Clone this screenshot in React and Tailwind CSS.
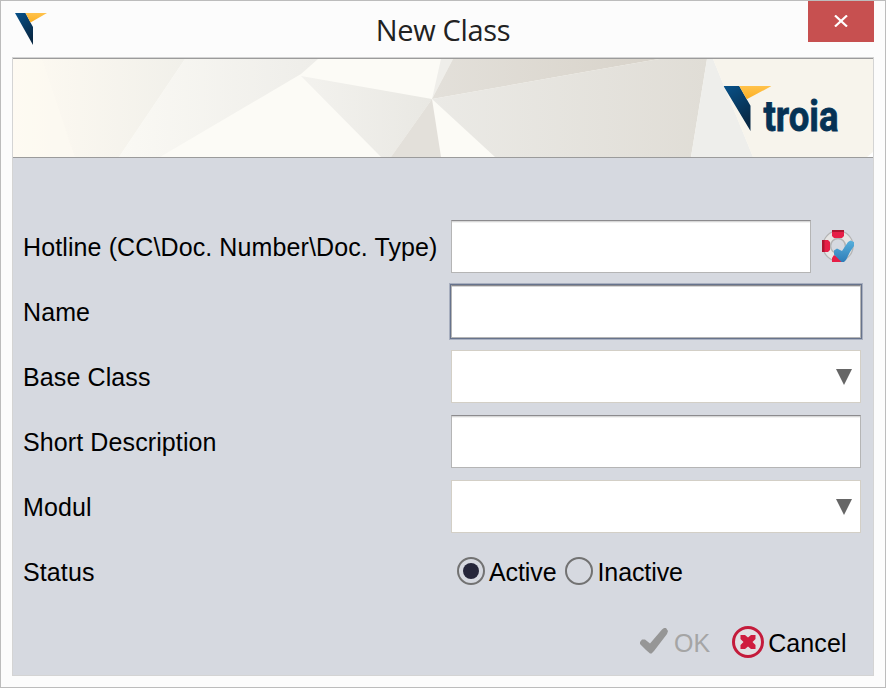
function BrandMark({ id, className }) {
  return (
    <svg className={className} viewBox="0 0 32 32" preserveAspectRatio="none" aria-hidden="true">
      <defs>
        <linearGradient id={id} x1="0" y1="0" x2=".4" y2="1">
          <stop offset="0" stopColor="#08528a" />
          <stop offset="1" stopColor="#082844" />
        </linearGradient>
        <linearGradient id={id + "y"} x1="0" y1="0" x2="0" y2="1">
          <stop offset="0" stopColor="#ffc24c" />
          <stop offset="1" stopColor="#fdb022" />
        </linearGradient>
      </defs>
      <path d="M0 0H10.5L15.5 9.5L18 14V32Z" fill={`url(#${id})`} />
      <path d="M10.5 0H32L15.5 9.5Z" fill={`url(#${id}y)`} />
    </svg>
  );
}

function TitleBar() {
  return (
    <header className="grid h-14 grid-cols-[1fr_auto_1fr] items-start">
      <div className="pl-3.5 pt-3">
        <BrandMark id="mark-small" className="h-8 w-8" />
      </div>
      <h1 className="whitespace-nowrap pt-[9px] font-['Open_Sans',sans-serif] text-[29px] leading-10 tracking-[-0.35px] text-[#222]">
        New Class
      </h1>
      <button className="mr-[11px] flex h-[41px] w-[66px] items-center justify-center justify-self-end bg-[#c75050]" aria-label="Close">
        <svg className="mb-0.5 h-3 w-3.5" viewBox="0 0 14 12" aria-hidden="true">
          <path d="M1 .5L13 11.5M13 .5L1 11.5" stroke="#fff" strokeWidth="2.2" />
        </svg>
      </button>
    </header>
  );
}

function Banner() {
  return (
    <svg className="block h-[98px] w-[860px]" viewBox="13 59 860 98" role="img" aria-label="troia">
      <defs>
        <linearGradient id="warm">
          <stop offset="0" stopColor="#fefaf2" />
          <stop offset="1" stopColor="#f1f0ea" />
        </linearGradient>
        <linearGradient id="cool">
          <stop offset="0" stopColor="#faf9f4" />
          <stop offset="1" stopColor="#eeede9" />
        </linearGradient>
        <linearGradient id="tan">
          <stop offset="0" stopColor="#e3e0da" />
          <stop offset="1" stopColor="#d8d3ca" />
        </linearGradient>
        <linearGradient id="stone">
          <stop offset="0" stopColor="#ebeae6" />
          <stop offset="1" stopColor="#e0ddd6" />
        </linearGradient>
        <linearGradient id="shard">
          <stop offset="0" stopColor="#f3f2ee" />
          <stop offset="1" stopColor="#e9e8e3" />
        </linearGradient>
      </defs>
      <path d="M13 59H873V157H13Z" fill="#fcfbf6" />
      <path d="M13 59H185L119 157H13Z" fill="url(#warm)" />
      <path d="M13 59H42L75 157H13Z" fill="#fefaf2" opacity=".6" />
      <path d="M185 59H318L301 74L160 157H119Z" fill="url(#cool)" />
      <path d="M301 76L432 99L391 157H381Z" fill="url(#shard)" />
      <path d="M432 99L441 157H391Z" fill="#e3e0da" />
      <path d="M441 59H453L432 99Z" fill="#efeeea" />
      <path d="M453 59H659L590 71L432 99Z" fill="url(#tan)" />
      <path d="M432 99L590 71L659 59H707L691 157H495Z" fill="url(#stone)" />
      <path d="M707 59H713L753 157H691Z" fill="#eeeeeb" />
      <path d="M713 59H873V157H753Z" fill="#f7f4ec" />
      <path d="M867 157L873 152V157Z" fill="#fff" />
      <svg x="723.5" y="86" width="48" height="45">
        <BrandMark id="mark-large" className="h-full w-full" />
      </svg>
      <text x="763.5" y="131" fontSize="43" fontWeight="700" textLength="75" lengthAdjust="spacingAndGlyphs" fill="#053255" stroke="#053255" strokeWidth="0.8" className="font-['Roboto',sans-serif]">
        troia
      </text>
    </svg>
  );
}

function LifebuoyCheck() {
  return (
    <svg className="h-8 w-8" viewBox="0 0 32 32" aria-hidden="true">
      <defs>
        <linearGradient id="tick" x1="0" y1="0" x2="0" y2="1">
          <stop offset="0" stopColor="#58b0dc" />
          <stop offset="1" stopColor="#2e7db8" />
        </linearGradient>
      </defs>
      <circle cx="16" cy="16" r="11.2" fill="none" stroke="#b4b4b4" strokeWidth="9" />
      <circle cx="16" cy="16" r="11.3" fill="none" stroke="#e6e5e4" strokeWidth="6.2" />
      <path d="M10 0H22V6L20 8H12L10 6Z" fill="#e61f47" />
      <path d="M10 0H22V2H10Z" fill="#ad1630" />
      <path d="M0 10H6L8 12V20L6 22H0Z" fill="#e61f47" />
      <path d="M0 10H2.5V22H0Z" fill="#ad1630" />
      <path d="M12 25L20 29V32H10V28Z" fill="#e61f47" />
      <path d="M12 20.5L15 18.5L20 21L26 12L28.5 10.5L32 12V16L28 22L24 30L22 32H19.5L12 24.5Z" fill="url(#tick)" />
    </svg>
  );
}

function Row({ label, children }) {
  return (
    <div className="grid h-[65px] grid-cols-[428px_1fr] items-center">
      <span className="whitespace-nowrap tracking-[0.11px]">{label}</span>
      <div className="flex items-center">{children}</div>
    </div>
  );
}

const field = "h-[53px] border border-[#b5b5b5] border-t-[#8c8b8e] bg-white shadow-[inset_0_1px_0_#d7d7d7,inset_0_2px_0_#f2f2f2] outline-none px-2";

function Select({ label }) {
  return (
    <button aria-label={label} className="flex h-[53px] w-[410px] items-center justify-end border border-[#d3cfc6] bg-white pr-2">
      <svg className="h-4 w-4" viewBox="0 0 16 16" aria-hidden="true">
        <path d="M0 0H16L8 16Z" fill="#666" />
      </svg>
    </button>
  );
}

function Radio({ label, checked }) {
  return (
    <label className="flex items-center gap-1">
      <span className="flex h-7 w-7 items-center justify-center rounded-full border-2 border-[#727272]">
        {checked && <span className="h-4 w-4 rounded-full bg-[#25263a]" />}
      </span>
      <span className="pt-0.5 tracking-[-0.1px]">{label}</span>
    </label>
  );
}

function Actions() {
  return (
    <div className="flex h-8 items-center pl-[627px]">
      <button disabled className="flex items-center text-[#a5a5a5]">
        <svg className="mr-1.5 h-8 w-[28px]" viewBox="0 0 28 32" aria-hidden="true">
          <path d="M0 16L2 13.5H5L10 17.5L22 3.5L24 2H26L28 5L27 8L14 25L11.5 27.5H10L6 24L0 18Z" fill="#969696" />
        </svg>
        <span className="pt-0.5">OK</span>
      </button>
      <button className="ml-[22px] flex items-center gap-1">
        <svg className="h-8 w-8" viewBox="0 0 32 32" aria-hidden="true">
          <circle cx="16" cy="16" r="14.5" fill="#e1dfe2" stroke="#c41b3b" strokeWidth="3" />
          <path d="M8.5 9H13L16 11.5L19 9H23.5V13L20.5 16L23.5 19V23H19L16 20.5L13 23H8.5V19L11.5 16L8.5 13Z" fill="#cf1c3e" />
        </svg>
        <span className="pt-0.5 tracking-[0.1px]">Cancel</span>
      </button>
    </div>
  );
}

export default function App() {
  return (
    <div className="h-[688px] w-[886px] overflow-hidden border border-[#bcbcbc] bg-[#fcfcfc]">
      <TitleBar />
      <main className="ml-[11px] h-[619px] w-[862px] border border-[#d4d4d4] bg-[#d6d9e0] font-['Liberation_Sans',Arial,sans-serif] text-[25px] leading-[30px] text-black">
        <div className="h-[100px] border-y border-[#9b9b9b]">
          <Banner />
        </div>
        <form className="pl-2.5 pt-14">
          <Row label="Hotline (CC\Doc. Number\Doc. Type)">
            <input aria-label="Hotline" className={`${field} w-[360px]`} />
            <button className="mb-0.5 ml-[11px]" type="button" aria-label="Check hotline">
              <LifebuoyCheck />
            </button>
          </Row>
          <Row label="Name">
            <input aria-label="Name" className="h-[53px] w-[410px] border border-[#b5b5b5] border-t-[#8c8b8e] bg-white px-2 shadow-[inset_0_1px_0_#d7d7d7,0_0_0_1px_#67738c,0_0_0_2px_#a8afbf] outline-none" />
          </Row>
          <Row label="Base Class">
            <Select label="Base Class" />
          </Row>
          <Row label="Short Description">
            <input aria-label="Short Description" className={`${field} w-[410px]`} />
          </Row>
          <Row label="Modul">
            <Select label="Modul" />
          </Row>
          <Row label="Status">
            <div className="mb-0.5 flex gap-[9px] pl-1.5">
              <Radio label="Active" checked />
              <Radio label="Inactive" />
            </div>
          </Row>
        </form>
        <div className="pt-[22px]">
          <Actions />
        </div>
      </main>
    </div>
  );
}
